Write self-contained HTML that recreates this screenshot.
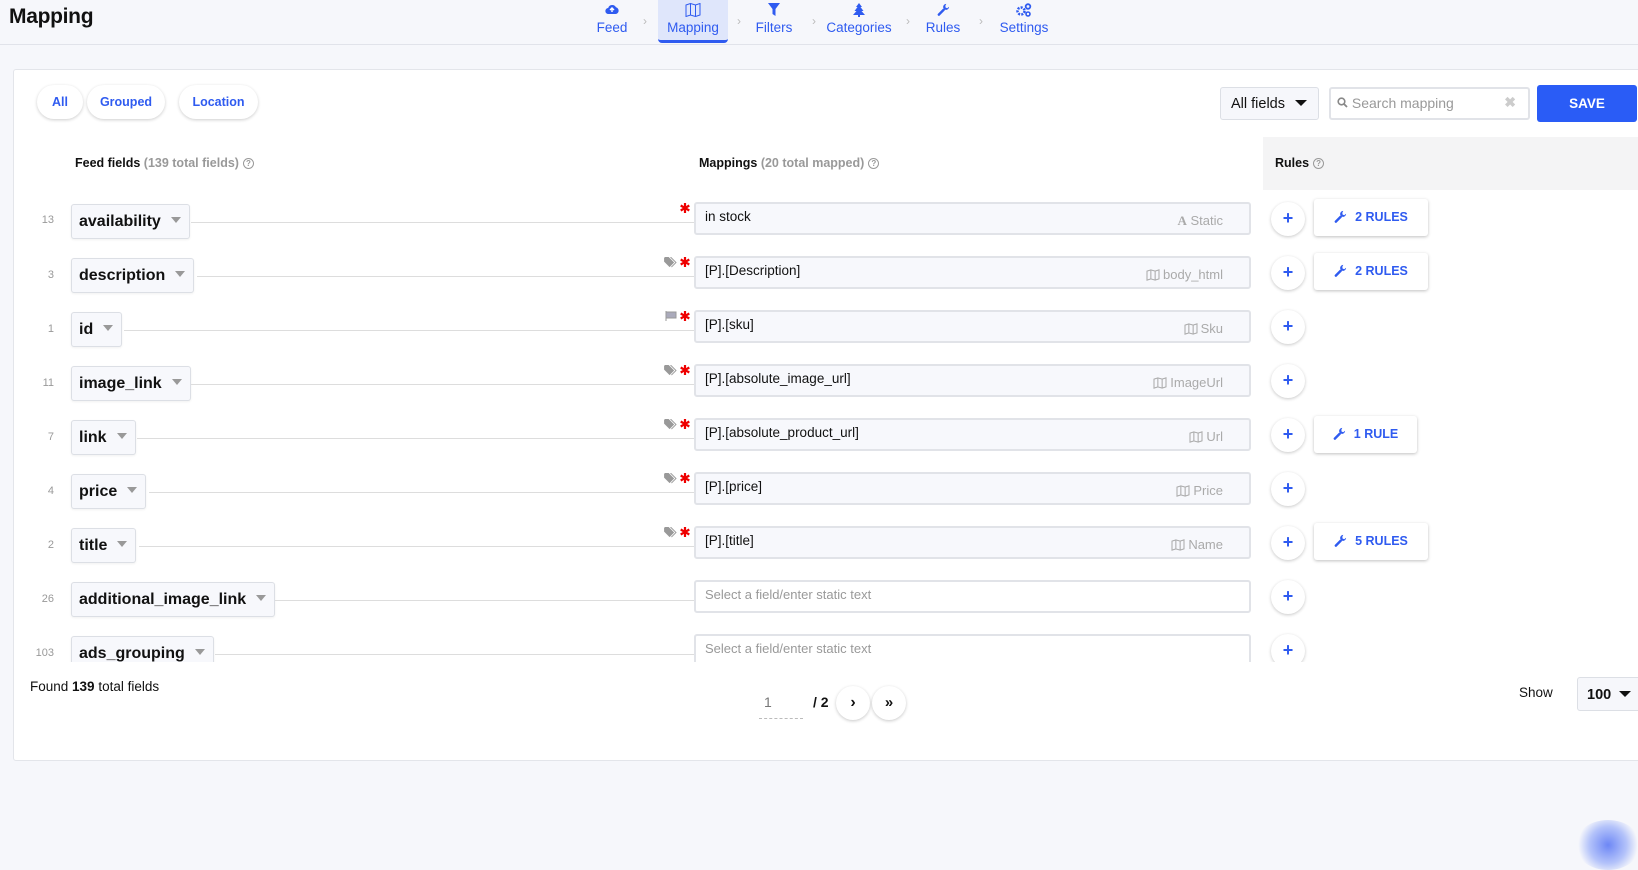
<!DOCTYPE html>
<html><head><meta charset="utf-8">
<style>
*{box-sizing:border-box;margin:0;padding:0}
body{width:1638px;height:846px;overflow:hidden;background:#f6f7fb;font-family:"Liberation Sans",Arial,sans-serif;color:#111;position:relative}
.abs{position:absolute}
.hdr{left:0;top:0;width:1638px;height:45px;border-bottom:1px solid #e1e3ea;background:#f6f7fb}
.title{left:9px;top:5px;font-size:21px;font-weight:bold;letter-spacing:-0.3px}
.nav{top:0;height:44px;text-align:center;color:#2f5bf0;font-size:13.5px}
.nav .ic{display:block;height:20px;padding-top:3px}
.chev{top:14px;color:#bbb;font-size:12px}
.card{left:13px;top:69px;width:1640px;height:692px;background:#fff;border:1px solid #e3e5ea;border-radius:3px}
.pill{top:85px;height:34px;border-radius:17px;background:#fff;box-shadow:0 1px 3px rgba(0,0,0,.2);color:#2f5bf0;font-weight:bold;font-size:12.5px;text-align:center;line-height:34px}
.sel{border:1px solid #dcdfe5;border-radius:3px;background:#f6f7fb}
.hd{top:156px;font-size:12.5px;font-weight:bold}
.hd span{color:#999;font-weight:bold}
.q{display:inline-block;width:11px;height:11px;border:1px solid #999;border-radius:50%;font-size:8px;line-height:9px;text-align:center;color:#999;vertical-align:1px;margin-left:4px;font-weight:normal}
.num{width:40px;text-align:right;font-size:11px;color:#999;left:14px}
.fld{left:71px;height:35px;border:1px solid #dcdfe5;border-radius:3px;background:#f7f8fc;font-size:16px;font-weight:bold;line-height:33px;padding:0 8px 0 7px;box-shadow:0 1px 2px rgba(0,0,0,.06);white-space:nowrap}
.fld i{display:inline-block;width:0;height:0;border-left:5px solid transparent;border-right:5px solid transparent;border-top:6px solid #999;margin-left:10px;vertical-align:3px}
.ln{height:1px;background:#ddd}
.inp{left:694px;width:557px;height:33px;border:2px solid #e1e3e8;border-radius:3px;background:#f7f8fc;font-size:13.5px;padding:5px 9px;white-space:nowrap}
.inp.e{background:#fff;color:#999;font-size:13px}
.gh{position:absolute;right:26px;top:9px;color:#aaa;font-size:13px}
.gh svg{vertical-align:-2px;margin-right:3px}
.ast{left:680px}
.tg{left:664px}
.plus{left:1271px;width:34px;height:34px;border-radius:50%;background:#fff;box-shadow:0 1px 3px rgba(0,0,0,.22);color:#2f5bf0;font-weight:bold;font-size:18px;text-align:center;line-height:33px}
.rb{left:1314px;height:37px;background:#fff;border-radius:3px;box-shadow:0 1px 3px rgba(0,0,0,.25);color:#2f5bf0;font-weight:bold;font-size:12.5px;line-height:37px;text-align:center}
.rb svg{vertical-align:-2px;margin-right:8px}
.clip{left:14px;top:137px;width:1624px;height:525px;overflow:hidden}
</style></head><body>
<svg width="0" height="0" style="position:absolute">
<defs>
<symbol id="map" viewBox="0 0 16 14"><path d="M1 2.5l4.5-1.5 5 1.5L15 1v10.5L10.5 13l-5-1.5L1 13Z M5.5 1v10.5M10.5 2.5V13" stroke="#aaa" stroke-width="1.2" fill="none"/></symbol>
<symbol id="wr" viewBox="0 0 14 14"><path d="M2 12.5 7.2 7.3" stroke="#2f5bf0" stroke-width="2.6" stroke-linecap="round"/><path d="M10 1a3.3 3.3 0 0 0-3.2 4.4l1.8 1.8A3.3 3.3 0 0 0 13 4l-2 1.6-1.8-.8L9 3z" fill="#2f5bf0"/></symbol>
<symbol id="tag" viewBox="0 0 14 12"><path d="M0 1v4l6 6 5-5-6-6H1ZM2.5 2.5a1 1 0 1 0 .01 0Z" fill="#999"/><path d="M7 0l6 6-5 5" stroke="#999" fill="none"/></symbol>
<symbol id="flag" viewBox="0 0 12 10"><path d="M1 0v10M1 1h10v6H1" fill="#aab" stroke="#999"/></symbol>
<symbol id="ast" viewBox="0 0 10 10"><path d="M5 0v10M0.7 2.5l8.6 5M0.7 7.5l8.6-5" stroke="#e00" stroke-width="2.2"/></symbol>
</defs></svg>
<div class="abs hdr"></div>
<div class="abs title">Mapping</div>
<div class="abs" style="left:658px;top:0;width:70px;height:43px;background:#dfe6fb;border-radius:0 0 4px 4px;border-bottom:3px solid #2f5bf0"></div>
<div class="abs nav" style="left:587px;width:50px"><span class="ic"><svg width="14" height="12" viewBox="0 0 14 12"><path d="M3.5 11a3 3 0 0 1-.3-6A4.2 4.2 0 0 1 11 4.3 3.4 3.4 0 0 1 10.6 11Z" fill="#2f5bf0"/><path d="M7 9V5M5 7l2-2 2 2" stroke="#fff" stroke-width="1.4" fill="none"/></svg></span><span>Feed</span></div>
<div class="abs nav" style="left:658px;width:70px"><span class="ic"><svg width="16" height="14" viewBox="0 0 16 14"><path d="M1 2l4.5-1.5 5 1.5L15 .5v11.5L10.5 13.5l-5-1.5L1 13.5Z M5.5.5v11.5M10.5 2v11.5" stroke="#2f5bf0" fill="none"/></svg></span><span>Mapping</span></div>
<div class="abs nav" style="left:749px;width:50px"><span class="ic"><svg width="12" height="13" viewBox="0 0 12 13"><path d="M0 0h12L7.5 6v7L4.5 11V6Z" fill="#2f5bf0"/></svg></span><span>Filters</span></div>
<div class="abs nav" style="left:822px;width:74px"><span class="ic"><svg width="12" height="14" viewBox="0 0 12 14"><path d="M6 0 9 4H7.5L10.5 8H8.5L12 12H0L3.5 8H1.5L4.5 4H3ZM5 12h2v2H5Z" fill="#2f5bf0"/></svg></span><span>Categories</span></div>
<div class="abs nav" style="left:918px;width:50px"><span class="ic"><svg width="13" height="13"><use href="#wr"/></svg></span><span>Rules</span></div>
<div class="abs nav" style="left:994px;width:60px"><span class="ic"><svg width="16" height="14" viewBox="0 0 16 14"><circle cx="5" cy="8" r="3.5" stroke="#2f5bf0" stroke-width="2.5" fill="none" stroke-dasharray="2 1.2"/><circle cx="12" cy="3.5" r="2.3" stroke="#2f5bf0" stroke-width="1.8" fill="none"/><circle cx="12" cy="11" r="2" stroke="#2f5bf0" stroke-width="1.6" fill="none"/></svg></span><span>Settings</span></div>
<div class="abs chev" style="left:643px">›</div><div class="abs chev" style="left:737px">›</div><div class="abs chev" style="left:812px">›</div><div class="abs chev" style="left:906px">›</div><div class="abs chev" style="left:979px">›</div>

<div class="abs card"></div>
<div class="abs pill" style="left:37px;width:46px">All</div>
<div class="abs pill" style="left:87px;width:78px">Grouped</div>
<div class="abs pill" style="left:179px;width:79px">Location</div>
<div class="abs sel" style="left:1220px;top:87px;width:99px;height:33px;font-size:14.5px;padding:8px 0 0 10px">All fields <span style="display:inline-block;border-left:6px solid transparent;border-right:6px solid transparent;border-top:6px solid #111;margin-left:6px;vertical-align:2px"></span></div>
<div class="abs" style="left:1329px;top:87px;width:201px;height:33px;border:2px solid #e1e3e8;border-radius:3px;background:#fff;font-size:14px;color:#999;padding:6px 0 0 6px"><svg width="11" height="11" viewBox="0 0 11 11"><circle cx="4.5" cy="4.5" r="3.3" stroke="#888" stroke-width="1.6" fill="none"/><path d="M7 7l3 3" stroke="#888" stroke-width="1.8"/></svg> Search mapping<span style="position:absolute;right:12px;top:5px;color:#ccc;font-weight:bold;font-size:14px">✖</span></div>
<div class="abs" style="left:1537px;top:85px;width:100px;height:37px;background:#2a5cf6;border-radius:3px;color:#fff;font-weight:bold;font-size:13.5px;text-align:center;line-height:37px">SAVE</div>
<div class="abs" style="left:1263px;top:137px;width:375px;height:53px;background:#f4f4f5"></div>
<div class="abs hd" style="left:75px">Feed fields <span>(139 total fields)</span><span class="q">?</span></div>
<div class="abs hd" style="left:699px">Mappings <span>(20 total mapped)</span><span class="q">?</span></div>
<div class="abs hd" style="left:1275px">Rules<span class="q">?</span></div>

<div class="abs clip"><div style="position:relative;left:-14px;top:-137px">
<div class="abs num" style="top:214px">13</div><div class="abs fld" style="top:204px">availability<i></i></div><div class="abs ln" style="left:191px;width:503px;top:222px"></div>
<svg class="abs ast" style="top:203px" width="10" height="10"><use href="#ast"/></svg><div class="abs inp" style="top:202px">in stock<span class="gh"><b style="font-family:'Liberation Serif',serif">A</b> Static</span></div>
<div class="abs plus" style="top:202px">+</div><div class="abs rb" style="top:199px;width:114px"><svg width="13" height="13"><use href="#wr"/></svg>2 RULES</div>

<div class="abs num" style="top:269px">3</div><div class="abs fld" style="top:258px">description<i></i></div><div class="abs ln" style="left:197px;width:497px;top:276px"></div>
<svg class="abs tg" style="top:257px" width="13" height="11"><use href="#tag"/></svg><svg class="abs ast" style="top:257px" width="10" height="10"><use href="#ast"/></svg><div class="abs inp" style="top:256px">[P].[Description]<span class="gh"><svg width="14" height="12"><use href="#map"/></svg>body_html</span></div>
<div class="abs plus" style="top:256px">+</div><div class="abs rb" style="top:253px;width:114px"><svg width="13" height="13"><use href="#wr"/></svg>2 RULES</div>

<div class="abs num" style="top:323px">1</div><div class="abs fld" style="top:312px">id<i></i></div><div class="abs ln" style="left:124px;width:570px;top:330px"></div>
<svg class="abs tg" style="top:311px;left:665px" width="12" height="10"><use href="#flag"/></svg><svg class="abs ast" style="top:311px" width="10" height="10"><use href="#ast"/></svg><div class="abs inp" style="top:310px">[P].[sku]<span class="gh"><svg width="14" height="12"><use href="#map"/></svg>Sku</span></div>
<div class="abs plus" style="top:310px">+</div>

<div class="abs num" style="top:377px">11</div><div class="abs fld" style="top:366px">image_link<i></i></div><div class="abs ln" style="left:191px;width:503px;top:384px"></div>
<svg class="abs tg" style="top:365px" width="13" height="11"><use href="#tag"/></svg><svg class="abs ast" style="top:365px" width="10" height="10"><use href="#ast"/></svg><div class="abs inp" style="top:364px">[P].[absolute_image_url]<span class="gh"><svg width="14" height="12"><use href="#map"/></svg>ImageUrl</span></div>
<div class="abs plus" style="top:364px">+</div>

<div class="abs num" style="top:431px">7</div><div class="abs fld" style="top:420px">link<i></i></div><div class="abs ln" style="left:137px;width:557px;top:438px"></div>
<svg class="abs tg" style="top:419px" width="13" height="11"><use href="#tag"/></svg><svg class="abs ast" style="top:419px" width="10" height="10"><use href="#ast"/></svg><div class="abs inp" style="top:418px">[P].[absolute_product_url]<span class="gh"><svg width="14" height="12"><use href="#map"/></svg>Url</span></div>
<div class="abs plus" style="top:418px">+</div><div class="abs rb" style="top:416px;width:103px"><svg width="13" height="13"><use href="#wr"/></svg>1 RULE</div>

<div class="abs num" style="top:485px">4</div><div class="abs fld" style="top:474px">price<i></i></div><div class="abs ln" style="left:149px;width:545px;top:492px"></div>
<svg class="abs tg" style="top:473px" width="13" height="11"><use href="#tag"/></svg><svg class="abs ast" style="top:473px" width="10" height="10"><use href="#ast"/></svg><div class="abs inp" style="top:472px">[P].[price]<span class="gh"><svg width="14" height="12"><use href="#map"/></svg>Price</span></div>
<div class="abs plus" style="top:472px">+</div>

<div class="abs num" style="top:539px">2</div><div class="abs fld" style="top:528px">title<i></i></div><div class="abs ln" style="left:139px;width:555px;top:546px"></div>
<svg class="abs tg" style="top:527px" width="13" height="11"><use href="#tag"/></svg><svg class="abs ast" style="top:527px" width="10" height="10"><use href="#ast"/></svg><div class="abs inp" style="top:526px">[P].[title]<span class="gh"><svg width="14" height="12"><use href="#map"/></svg>Name</span></div>
<div class="abs plus" style="top:526px">+</div><div class="abs rb" style="top:523px;width:114px"><svg width="13" height="13"><use href="#wr"/></svg>5 RULES</div>

<div class="abs num" style="top:593px">26</div><div class="abs fld" style="top:582px">additional_image_link<i></i></div><div class="abs ln" style="left:275px;width:419px;top:600px"></div>
<div class="abs inp e" style="top:580px">Select a field/enter static text</div>
<div class="abs plus" style="top:580px">+</div>

<div class="abs num" style="top:647px">103</div><div class="abs fld" style="top:636px">ads_grouping<i></i></div><div class="abs ln" style="left:215px;width:479px;top:654px"></div>
<div class="abs inp e" style="top:634px">Select a field/enter static text</div>
<div class="abs plus" style="top:634px">+</div>
</div></div>

<div class="abs" style="left:30px;top:679px;font-size:13.5px">Found <b>139</b> total fields</div>
<div class="abs" style="left:759px;top:694px;width:44px;height:25px;border-bottom:1px dashed #bbb;font-size:14px;color:#777;padding-left:5px">1</div>
<div class="abs" style="left:813px;top:694px;font-size:14px;font-weight:bold">/ 2</div>
<div class="abs plus" style="left:836px;top:686px;font-size:16px;color:#111">›</div>
<div class="abs plus" style="left:872px;top:686px;font-size:15px;color:#111">»</div>
<div class="abs" style="left:1519px;top:685px;font-size:13.5px">Show</div>
<div class="abs sel" style="left:1577px;top:677px;width:70px;height:34px;font-size:14.5px;font-weight:bold;padding:9px 0 0 9px">100 <span style="display:inline-block;border-left:6px solid transparent;border-right:6px solid transparent;border-top:6px solid #111;margin-left:4px;vertical-align:2px"></span></div>
<div class="abs" style="left:1575px;top:820px;width:66px;height:50px;border-radius:50%;background:radial-gradient(circle,#6d87f5 0,#b4c3fa 45%,rgba(240,243,255,0) 72%)"></div>
</body></html>
